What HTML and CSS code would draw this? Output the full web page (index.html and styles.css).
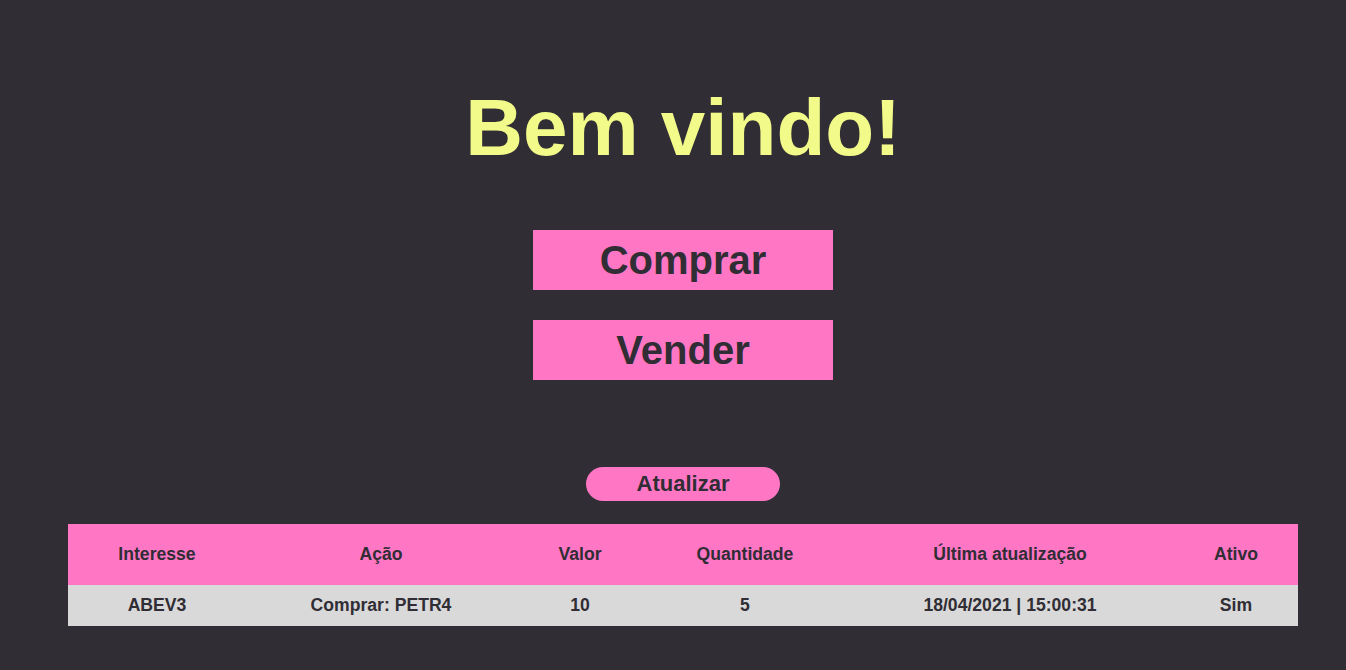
FILE: index.html
```html
<!DOCTYPE html>
<html lang="pt-BR">
<head>
<meta charset="utf-8">
<title>Bem vindo</title>
<link rel="stylesheet" href="styles.css">
</head>
<body>
<main class="page">
  <h1 class="title">Bem vindo!</h1>
  <div class="actions">
    <button class="action-btn">Comprar</button>
    <button class="action-btn">Vender</button>
  </div>
  <button class="refresh-btn">Atualizar</button>
  <table class="orders">
    <thead>
      <tr>
        <th class="c1">Interesse</th>
        <th class="c2">Ação</th>
        <th class="c3">Valor</th>
        <th class="c4">Quantidade</th>
        <th class="c5">Última atualização</th>
        <th class="c6">Ativo</th>
      </tr>
    </thead>
    <tbody>
      <tr>
        <td>ABEV3</td>
        <td>Comprar: PETR4</td>
        <td>10</td>
        <td>5</td>
        <td>18/04/2021 | 15:00:31</td>
        <td>Sim</td>
      </tr>
    </tbody>
  </table>
</main>
</body>
</html>
```

FILE: styles.css
```css
html, body {
  margin: 0;
  padding: 0;
  background: #302d35;
  height: 100%;
}
body {
  font-family: "Liberation Sans", Arial, sans-serif;
  color: #302d35;
}
.page {
  margin-left: 20px;
  padding-top: 82px;
  display: flex;
  flex-direction: column;
  align-items: center;
}
.title {
  margin: 0 0 56px 0;
  font-size: 80px;
  line-height: 92px;
  font-weight: bold;
  color: #f2fa8a;
}
.actions {
  display: flex;
  flex-direction: column;
  gap: 30px;
}
.action-btn {
  width: 300px;
  height: 60px;
  border: none;
  background: #ff77c4;
  color: #302d35;
  font-family: "Liberation Sans", Arial, sans-serif;
  font-weight: bold;
  font-size: 40px;
  padding: 0;
  cursor: pointer;
}
.refresh-btn {
  margin-top: 87px;
  width: 194px;
  height: 34px;
  border: none;
  border-radius: 17px;
  background: #ff77c4;
  color: #302d35;
  font-family: "Liberation Sans", Arial, sans-serif;
  font-weight: bold;
  font-size: 22px;
  padding: 0;
  cursor: pointer;
}
.orders {
  margin-top: 23px;
  width: 1230px;
  table-layout: fixed;
  border-collapse: collapse;
  font-size: 17.6px;
  font-weight: bold;
  text-align: center;
}
.orders th {
  background: #ff77c4;
  height: 61px;
  padding: 0;
  font-weight: bold;
}
.orders td {
  background: #d9d9d9;
  height: 41px;
  padding: 0;
}
.c1 { width: 178px; }
.c2 { width: 270px; }
.c3 { width: 128px; }
.c4 { width: 202px; }
.c5 { width: 328px; }
.c6 { width: 124px; }
```
